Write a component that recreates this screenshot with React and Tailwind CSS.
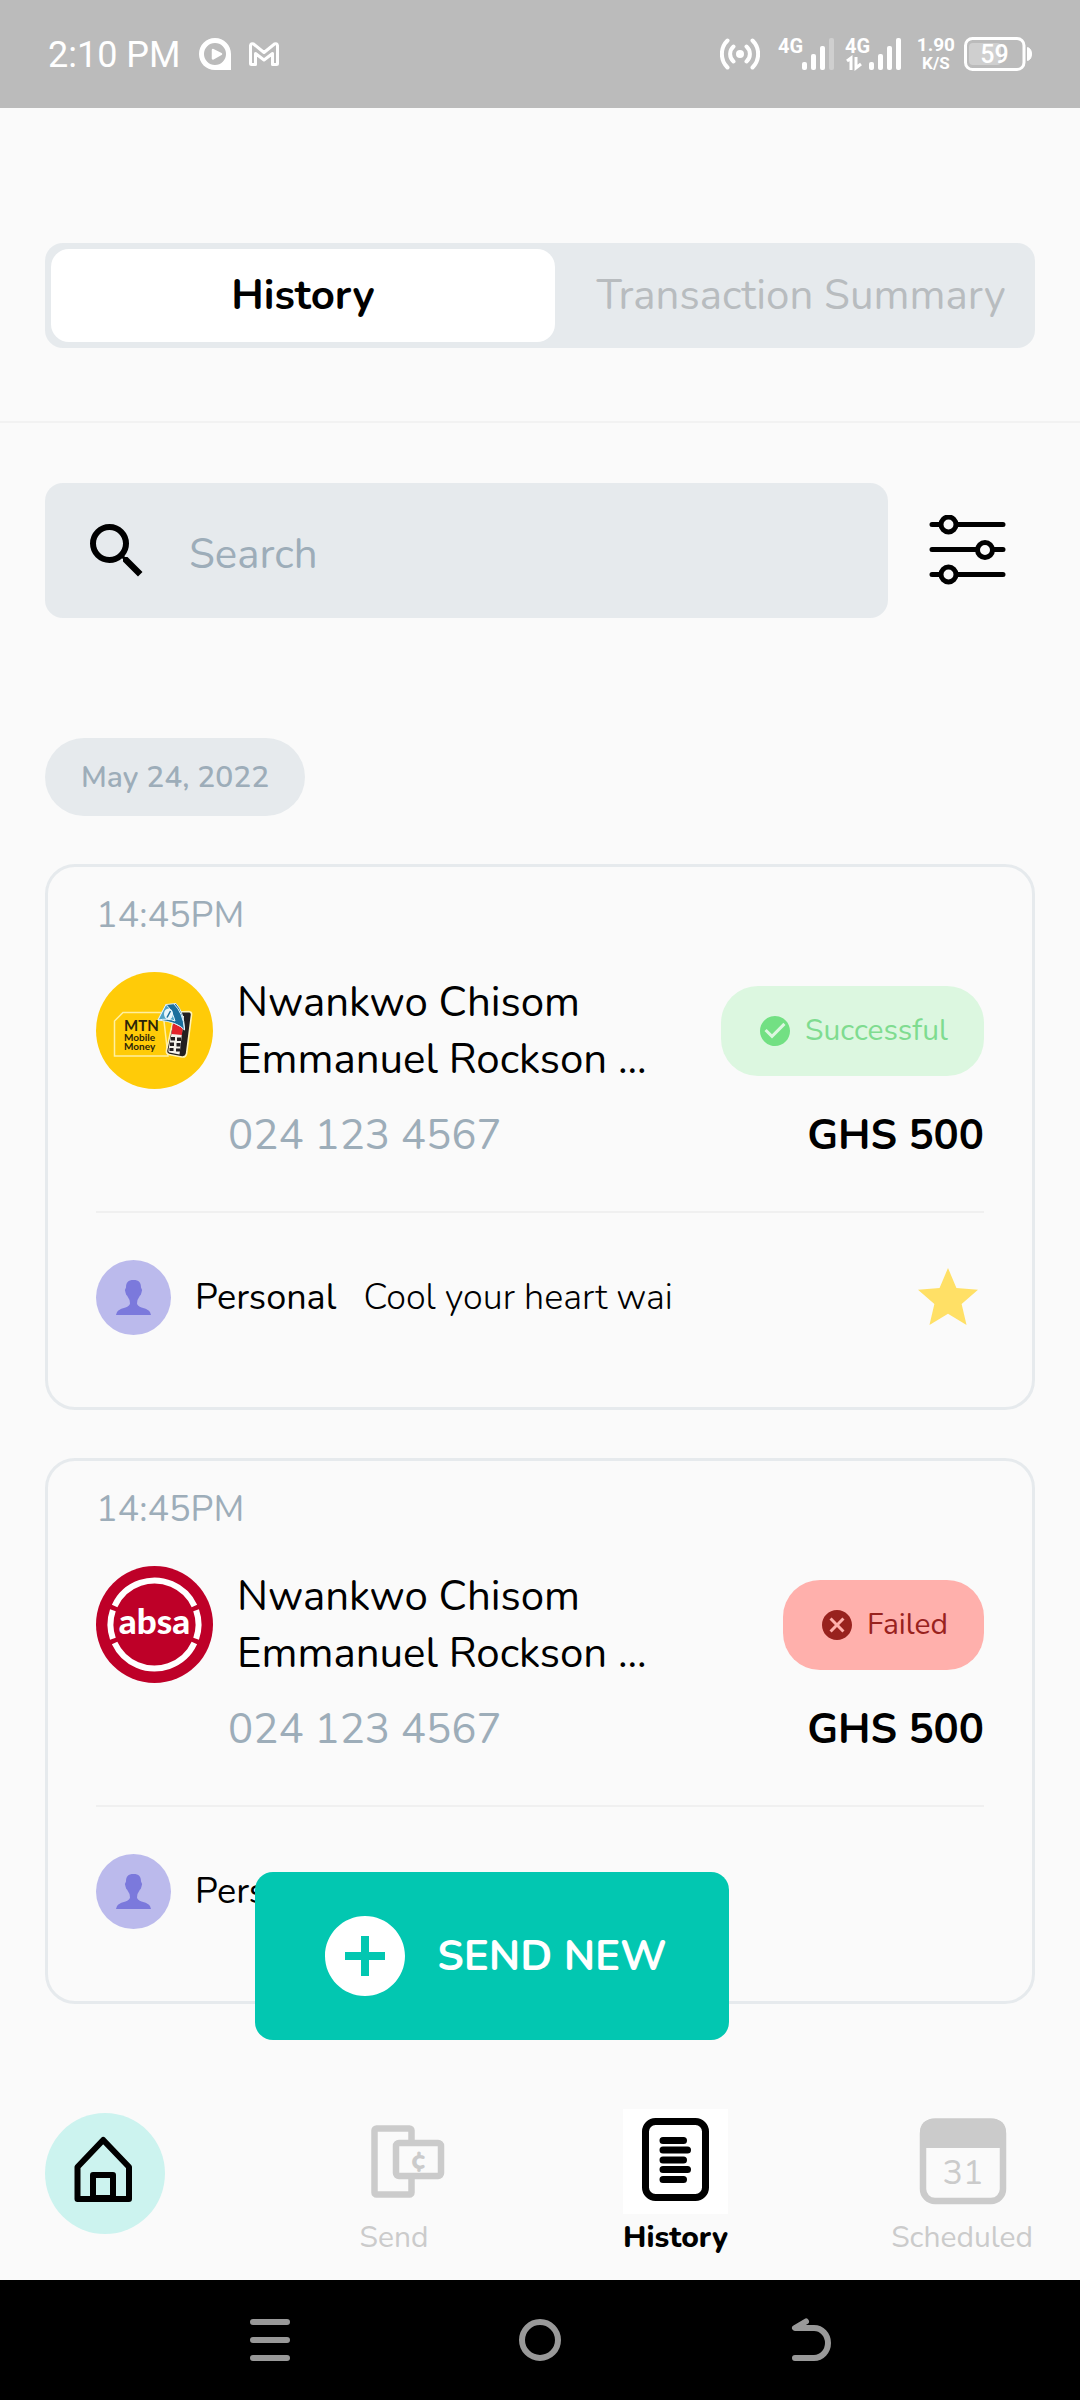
import React from 'react';
import { MdAddCircle, MdCancel, MdCheckCircle, MdSearch, MdStar } from 'react-icons/md';

const transactions = [
  {
    id: 1,
    time: '14:45PM',
    logo: 'mtn',
    name: 'Nwankwo Chisom Emmanuel Rockson ...',
    phone: '024 123 4567',
    status: 'Successful',
    amount: 'GHS 500',
    category: 'Personal',
    note: 'Cool your heart wai',
    starred: true,
  },
  {
    id: 2,
    time: '14:45PM',
    logo: 'absa',
    name: 'Nwankwo Chisom Emmanuel Rockson ...',
    phone: '024 123 4567',
    status: 'Failed',
    amount: 'GHS 500',
    category: 'Personal',
    note: 'Cool your heart wai',
    starred: false,
  },
];

function SignalBars({ dimLast, arrows }) {
  return (
    <svg width="58" height="52" viewBox="-2 -10 58 52" fill="#fff" aria-hidden="true">
      <text x="-1" y="15" fontSize="20" fontWeight="700">4G</text>
      {arrows && (
        <g fill="none" stroke="#fff" strokeWidth="3">
          <path d="M1 23L5 20V32" />
          <path d="M10 19V30L15 26" />
        </g>
      )}
      <rect x="23" y="24" width="5" height="8" rx="2" />
      <rect x="32" y="16" width="5" height="16" rx="2" />
      <rect x="41" y="8" width="5" height="24" rx="2" />
      <rect x="50" y="0" width="5" height="32" rx="2" opacity={dimLast ? 0.3 : 1} />
    </svg>
  );
}

function StatusBar() {
  return (
    <div className="flex h-[108px] items-center justify-between bg-[#bbbbbb] pl-12 pr-[47px] font-['Roboto',sans-serif] text-white">
      <div className="flex items-center gap-[18px]">
        <span className="pt-0.5 text-[36px] leading-[42px]">2:10 PM</span>
        <svg width="32" height="32" viewBox="0 0 32 32" aria-hidden="true">
          <path
            fill="#fff"
            fillRule="evenodd"
            d="M16 0C7 0 0 7 0 16s7 16 16 16h16V16C32 7 25 0 16 0zM16 5a11 11 0 1 1 0 22a11 11 0 0 1 0-22z"
          />
          <path d="M14 12L22 16L14 20.5z" fill="#fff" stroke="#fff" strokeWidth="2.5" strokeLinejoin="round" />
        </svg>
        <svg width="30" height="24" viewBox="0 0 30 24" fill="none" stroke="#fff" strokeWidth="3" strokeLinejoin="round" aria-hidden="true">
          <path d="M1.5 3.5V21.5Q1.5 22.5 2.5 22.5H6.5V11.5L15 18L23.5 11.5V22.5H27.5Q28.5 22.5 28.5 21.5V3.5Q28 1 25.5 2L15 10.5L4.5 2Q2 1 1.5 3.5z" />
        </svg>
      </div>
      <div className="flex items-center">
        <svg width="40" height="32" viewBox="0 0 40 32" fill="none" stroke="#fff" strokeWidth="4" strokeLinecap="round" aria-hidden="true">
          <circle cx="20" cy="16" r="4" fill="#fff" stroke="none" />
          <path d="M13.5 8.5a10 10 0 0 0 0 15M26.5 8.5a10 10 0 0 1 0 15M7.5 2.5a19 19 0 0 0 0 27M32.5 2.5a19 19 0 0 1 0 27" />
        </svg>
        <div className="ml-[17px] flex gap-[9px]">
          <SignalBars dimLast />
          <SignalBars arrows />
        </div>
        <div className="ml-[15px] flex flex-col items-center font-bold">
          <span className="text-[19px] leading-[18px]">1.90</span>
          <span className="text-[17px] leading-[18px]">K/S</span>
        </div>
        <svg className="ml-[9px]" width="69" height="34" viewBox="0 0 69 34" aria-hidden="true">
          <rect x="1.5" y="1.5" width="58.5" height="31" rx="7" fill="none" stroke="#fff" strokeWidth="3" />
          <rect x="5" y="6" width="32" height="22" rx="4" fill="#cfcfcf" />
          <path d="M63.5 10.5q4 1 4 6.5t-4 6.5z" fill="#fff" stroke="#fff" />
          <text x="30.5" y="26" fontSize="25" fontWeight="500" fill="#fff" textAnchor="middle">59</text>
        </svg>
      </div>
    </div>
  );
}

function MtnLogo() {
  return (
    <svg className="shrink-0" width="117" height="117" viewBox="0 0 117 117" role="img" aria-label="MTN Mobile Money">
      <circle cx="58.5" cy="58.5" r="58.5" fill="#ffcb08" />
      <path d="M27 40.5H67L72 84H18.5V49z" fill="none" stroke="#fff0a0" strokeWidth="1.5" />
      <g fill="#2b2408" fontFamily="Lato, sans-serif" fontWeight="700">
        <text x="28" y="58.5" fontSize="15">MTN</text>
        <text x="28" y="68.5" fontSize="10">Mobile</text>
        <text x="28" y="77.5" fontSize="10">Money</text>
      </g>
      <path d="M79 40L93 39.5Q96 40 95.5 43L90.5 82Q89.5 85.5 86 85L73 82.5Q70 82 70.5 78.5z" fill="#231f20" stroke="#fff3b8" strokeWidth="1.6" />
      <path d="M79 43L88 44L83.5 82.5L73.5 80.5Q72 80 72.5 77.5z" fill="#f4f1ea" />
      <path d="M77 51L86.5 56L86 63L75.5 62z" fill="#e3242b" />
      <path d="M75 65h4v3.5h-4zM81 65.5h4v3.5h-4zM74 70.5h4v3.5h-4zM80.5 71h4v3.5h-4zM73.5 76h4v3h-4zM80 76.5h4v3h-4z" fill="#231f20" />
      <path d="M70 32.5L80 31.5Q88 40 88.5 58Q82 50 62 48z" fill="#1b6e9c" stroke="#dff1f8" strokeWidth="1" />
      <path d="M78 32Q87 41 88.5 57" fill="none" stroke="#dff1f8" strokeWidth="1" />
      <path d="M70 32.5Q76 38 79 49Q72 46 62 48z" fill="#4fa3c7" stroke="#e8f6fb" strokeWidth="1" />
      <ellipse cx="72.5" cy="42" rx="4.5" ry="5.5" fill="#eaf6fb" />
      <path d="M71 45.5L74.5 39" stroke="#1b6e9c" strokeWidth="1.5" />
    </svg>
  );
}

function AbsaLogo() {
  return (
    <svg className="shrink-0" width="117" height="117" viewBox="0 0 117 117" role="img" aria-label="absa">
      <circle cx="58.5" cy="58.5" r="58.5" fill="#be0028" />
      <circle
        cx="58.5"
        cy="58.5"
        r="44"
        fill="none"
        stroke="#fff"
        strokeWidth="6"
        pathLength="360"
        strokeDasharray="38 6 130 6"
        transform="rotate(-19 58.5 58.5)"
      />
      <text x="58.5" y="68" fontSize="35" fontWeight="900" fill="#fff" textAnchor="middle" fontFamily="Lato, sans-serif">absa</text>
    </svg>
  );
}

function StatusBadge({ status }) {
  const failed = status === 'Failed';
  const tone = failed ? 'bg-[#ffb0ac] text-[#98221e]' : 'bg-[#dcf7e0] text-[#7fdc90]';
  return (
    <span className={`flex h-[90px] shrink-0 items-center gap-3 rounded-[37px] px-9 text-[30px] leading-[41px] ${tone}`}>
      {failed ? <MdCancel size={36} color="#98221e" /> : <MdCheckCircle size={36} color="#72e083" />}
      {status}
    </span>
  );
}

function TransactionCard({ item }) {
  return (
    <article className="rounded-[30px] border-[3px] border-[#e6eaed] px-12 pb-[72px] pt-6">
      <p className="text-[36px] leading-[49px] text-[#9dadb9]">{item.time}</p>
      <div className="mt-8 flex h-[117px] items-center justify-between">
        <div className="flex items-center gap-6">
          {item.logo === 'mtn' ? <MtnLogo /> : <AbsaLogo />}
          <h2 className="max-w-[450px] text-[42px] leading-[57px] text-black">{item.name}</h2>
        </div>
        <StatusBadge status={item.status} />
      </div>
      <div className="mt-[18px] flex justify-between text-[42px] leading-[57px]">
        <span className="pl-[132px] text-[#9dadb9]">{item.phone}</span>
        <span className="font-bold text-black">{item.amount}</span>
      </div>
      <div className="mt-[47px] flex items-center border-t-2 border-[#f0f0f0] pt-[47px] text-[36px] leading-[49px] text-black">
        <svg className="shrink-0" width="75" height="75" viewBox="0 0 75 75" aria-hidden="true">
          <circle cx="37.5" cy="37.5" r="37.5" fill="#bbbaec" />
          <path
            d="M37.500 20c5.500 0 7.500 2.500 7.500 7.500q1.500 1.500 .5 5q-.5 2.500-1.500 3q-3 4-3 8q.5 2.500 4.500 4q9.500 2 9.500 7.500h-35q0-5.500 9.500-7.500q4-1.500 4.500-4q0-4-3-8q-1-.5-1.500-3q-1-3.500 .5-5c0-5 2-7.500 7.500-7.500z"
            fill="#7b79dc"
          />
        </svg>
        <span className="ml-6">{item.category}</span>
        <span className="ml-[27px] font-light">{item.note}</span>
        {item.starred && (
          <button type="button" aria-label="Favourite" className="ml-auto h-[72px]">
            <MdStar size={72} color="#ffe066" />
          </button>
        )}
      </div>
    </article>
  );
}

function BottomNav() {
  return (
    <nav className="mt-[105px] flex items-start justify-between pb-[22px] pl-[45px] pr-[47px] text-[30px] leading-[41px] text-[#cbcbcb]">
      <a href="#home" aria-label="Home" className="mt-1">
        <svg width="120" height="121" viewBox="0 0 120 121" aria-hidden="true">
          <ellipse cx="60" cy="60.5" rx="60" ry="60.5" fill="#ccf3ef" />
          <g fill="none" stroke="#000" strokeWidth="6" strokeLinejoin="round">
            <path d="M32.5 54L58.2 27L84 54V86H32.5z" />
            <rect x="48" y="62" width="20" height="23" />
          </g>
        </svg>
      </a>
      <a href="#send" className="flex w-[132px] flex-col items-center gap-[3px]">
        <svg width="106" height="105" viewBox="0 0 106 105" fill="none" stroke="#cbcbcb" strokeWidth="6.5" aria-hidden="true">
          <rect x="33.5" y="19.5" width="37" height="66" rx="2" />
          <rect x="55" y="34" width="45" height="33" rx="3" fill="#fafafa" />
          <text x="77.5" y="60" fontSize="28" fontWeight="800" fill="#cbcbcb" stroke="none" textAnchor="middle">¢</text>
        </svg>
        <span>Send</span>
      </a>
      <a href="#history" aria-current="page" className="flex flex-col items-center gap-[3px] font-extrabold text-black">
        <svg width="105" height="105" viewBox="0 0 105 105" fill="none" stroke="#000" strokeWidth="7" strokeLinecap="round" aria-hidden="true">
          <rect width="105" height="105" fill="#fff" stroke="none" />
          <rect x="22.5" y="12.5" width="60" height="76" rx="10" />
          <path d="M40 31.5H60.5M40 41H64.5M40 51H60.5M40 60.5H64.5M40 70.5H60.5" />
        </svg>
        <span>History</span>
      </a>
      <a href="#scheduled" className="flex flex-col items-center gap-[3px]">
        <svg width="106" height="105" viewBox="0 0 106 105" fill="#cbcbcb" aria-hidden="true">
          <rect x="14" y="12.5" width="80" height="79.5" rx="12" fill="none" stroke="#cbcbcb" strokeWidth="6.5" />
          <path d="M11 39V24Q11 10 25 10H83Q97 10 97 24V39z" />
          <text x="54" y="75" fontSize="34" textAnchor="middle">31</text>
        </svg>
        <span>Scheduled</span>
      </a>
    </nav>
  );
}

function SystemNav() {
  return (
    <div className="grid h-[120px] grid-cols-3 items-center justify-items-center bg-black px-[12.5%]">
      <button type="button" aria-label="Recent apps">
        <svg width="48" height="48" viewBox="0 0 48 48" fill="none" stroke="#999" strokeWidth="6" strokeLinecap="round">
          <path d="M7 6H41M7 24H41M7 42H41" />
        </svg>
      </button>
      <button type="button" aria-label="Home screen">
        <svg width="48" height="48" viewBox="0 0 48 48" fill="none" stroke="#999" strokeWidth="6">
          <circle cx="24" cy="24" r="18" />
        </svg>
      </button>
      <button type="button" aria-label="Back">
        <svg width="48" height="48" viewBox="0 0 48 48" fill="none" stroke="#999" strokeWidth="6" strokeLinecap="round" strokeLinejoin="round">
          <path d="M20 5.5L9 12H28a14 15 0 0 1 0 30H9" />
        </svg>
      </button>
    </div>
  );
}

export default function App() {
  return (
    <div className="flex min-h-screen flex-col bg-[#fafafa] font-['Nunito','Open_Sans',sans-serif]">
      <StatusBar />
      <header className="border-b-2 border-[#f2f2f2] px-[45px] pb-[73px] pt-[135px]">
        <div role="tablist" className="grid grid-cols-[504fr_474fr] rounded-[18px] bg-[#e6eaed] p-1.5 text-[42px] leading-[57px]">
          <button type="button" role="tab" aria-selected="true" className="h-[93px] rounded-[18px] bg-white font-bold text-black">
            History
          </button>
          <button type="button" role="tab" aria-selected="false" className="h-[93px] whitespace-nowrap pl-[18px] text-[#b8bcbf]">
            Transaction Summary
          </button>
        </div>
      </header>
      <main className="relative px-[45px] pt-[60px]">
        <div className="flex items-center">
          <label className="flex h-[135px] flex-1 items-center gap-9 rounded-[18px] bg-[#e6eaed] px-9">
            <MdSearch size={72} color="#000" aria-hidden="true" />
            <input
              type="text"
              placeholder="Search"
              aria-label="Search"
              className="min-w-0 flex-1 bg-transparent pt-2 text-[42px] leading-[57px] text-black outline-none placeholder:text-[#9dadb9]"
            />
          </label>
          <button type="button" aria-label="Filter" className="ml-[41px] mr-7">
            <svg width="78" height="72" viewBox="0 0 78 72" stroke="#000" strokeWidth="5" strokeLinecap="round" aria-hidden="true">
              <path d="M3 9.5H74M3 34.5H74M3 59.5H74" />
              <circle cx="19.5" cy="9.5" r="7.5" fill="#fafafa" />
              <circle cx="56" cy="35" r="7.5" fill="#fafafa" />
              <circle cx="19.5" cy="59.5" r="7.5" fill="#fafafa" />
            </svg>
          </button>
        </div>
        <div className="mt-[120px] flex">
          <span className="flex h-[78px] items-center rounded-[39px] bg-[#e6eaed] px-9 text-[30px] font-semibold leading-[41px] text-[#9dadb9]">
            May 24, 2022
          </span>
        </div>
        <div className="mt-12 flex flex-col gap-12">
          {transactions.map((item) => (
            <TransactionCard key={item.id} item={item} />
          ))}
        </div>
        <button
          type="button"
          className="absolute -bottom-9 left-[255px] flex h-[168px] w-[474px] items-center justify-center gap-6 rounded-[18px] bg-[#02c7b1] text-[42px] font-bold leading-[57px] text-white"
        >
          <MdAddCircle size={96} aria-hidden="true" />
          SEND NEW
        </button>
      </main>
      <BottomNav />
      <SystemNav />
    </div>
  );
}
